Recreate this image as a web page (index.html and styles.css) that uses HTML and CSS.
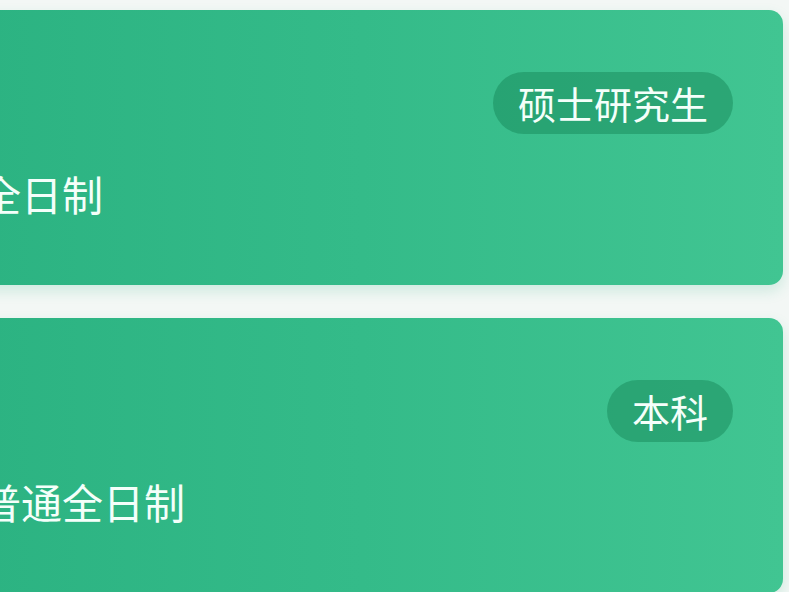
FILE: index.html
```html
<!DOCTYPE html>
<html lang="zh-CN">
<head>
<meta charset="utf-8">
<title>学历</title>
<link rel="stylesheet" href="styles.css">
</head>
<body>
<main class="list">
  <section class="card">
    <div class="card-head">
      <span class="badge">硕士研究生</span>
    </div>
    <p class="card-text">全日制</p>
  </section>
  <section class="card">
    <div class="card-head">
      <span class="badge">本科</span>
    </div>
    <p class="card-text">普通全日制</p>
  </section>
</main>
</body>
</html>
```

FILE: styles.css
```css
html, body {
  margin: 0;
  padding: 0;
}

body {
  background: #f3f7f5;
  font-family: "Noto Sans CJK SC", "Noto Sans", sans-serif;
  overflow: hidden;
}

.list {
  display: flex;
  flex-direction: column;
  gap: 33px;
  padding: 10px 6px 0 0;
  margin-left: -60px;
}

.card {
  height: 275px;
  box-sizing: border-box;
  padding: 62px 50px 0 40px;
  border-radius: 14px;
  background: linear-gradient(90deg, #2bb281 0%, #34bb89 50%, #41c592 100%);
  box-shadow: 0 6px 14px rgba(40, 175, 125, 0.18);
  color: #ffffff;
}

.card-head {
  display: flex;
  justify-content: flex-end;
}

.badge {
  display: inline-block;
  height: 62px;
  line-height: 62px;
  padding: 0 25px;
  border-radius: 31px;
  background: rgba(20, 130, 85, 0.45);
  font-size: 38px;
  color: #f4fffa;
}

.card-text {
  margin: 37px 0 0 0;
  font-size: 41px;
  line-height: 44px;
  color: #f4fffa;
}
```
